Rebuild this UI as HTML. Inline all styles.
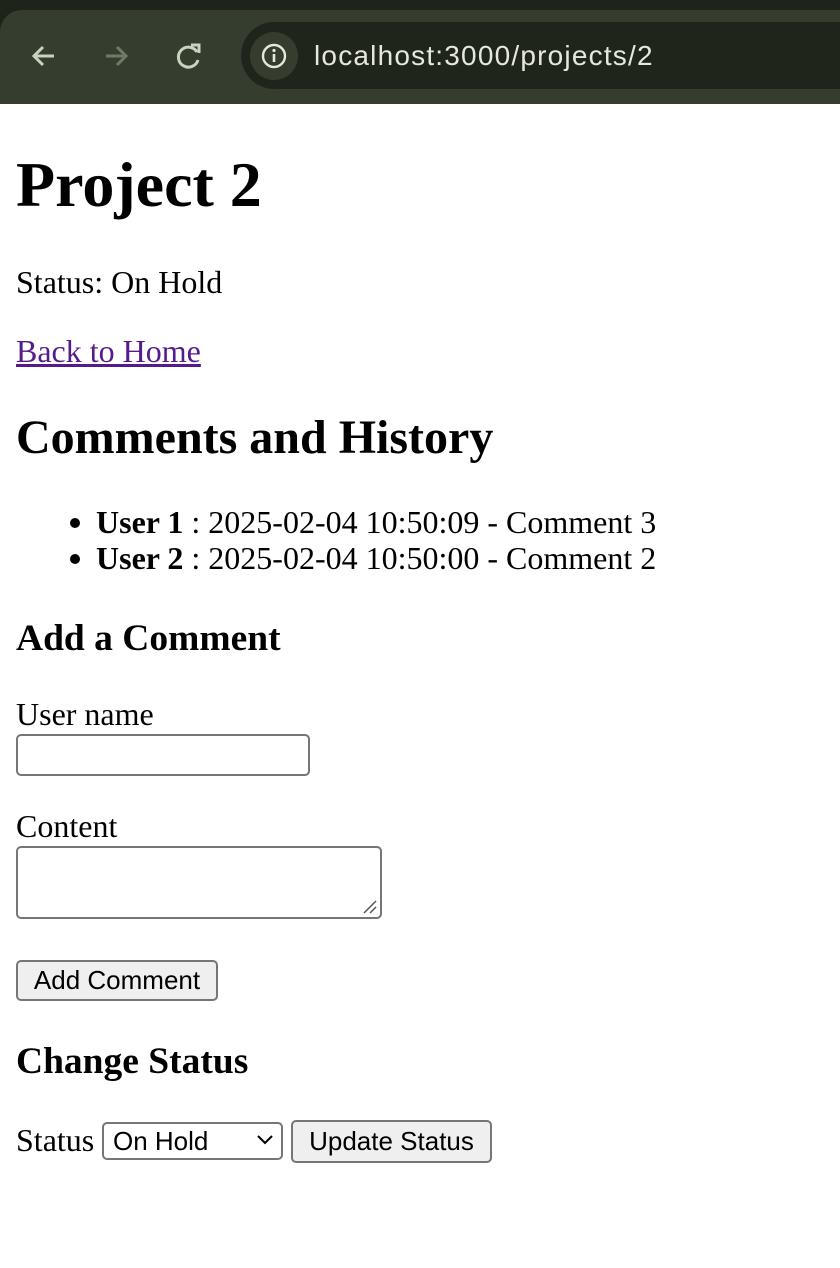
<!DOCTYPE html>
<html><head><meta charset="utf-8"><style>
*{margin:0;padding:0;box-sizing:border-box}
body{width:840px;height:1268px;background:#fff;position:relative;overflow:hidden;font-family:"Liberation Serif",serif;color:#000}
.a{position:absolute;white-space:nowrap;line-height:1}
.top{position:absolute;left:0;top:0;width:840px;height:104px;background:#1f241b}
.bar{position:absolute;left:0;top:10px;width:840px;height:94px;background:#343d2e;border-top-left-radius:22px}
.pill{position:absolute;left:241px;top:22px;width:640px;height:67px;background:#20251c;border-radius:34px}
.info{position:absolute;left:250px;top:32px;width:48px;height:48px;border-radius:50%;background:#343d2e}
.url{position:absolute;left:314px;top:42px;font-family:"Liberation Sans",sans-serif;font-size:28px;letter-spacing:1.2px;color:#e4e8de;line-height:1}
.b{font-weight:bold}
.box{position:absolute;border:2px solid #767676;border-radius:5px;background:#fff}
.btn{position:absolute;border:2px solid #767676;border-radius:5px;background:#efefef;font-family:"Liberation Sans",sans-serif;font-size:26px;text-align:center;line-height:36px}
</style></head><body>
<div class="top"></div><div class="bar"></div>
<svg style="position:absolute;left:28px;top:40px" width="32" height="32" viewBox="0 0 32 32"><path d="M26 16H6M15 7l-9 9 9 9" stroke="#c9d1c1" stroke-width="3" fill="none"/></svg>
<svg style="position:absolute;left:100px;top:40px" width="32" height="32" viewBox="0 0 32 32"><path d="M6 16h20M17 7l9 9-9 9" stroke="#6f7a66" stroke-width="3" fill="none"/></svg>
<svg style="position:absolute;left:173px;top:40px" width="32" height="32" viewBox="0 0 32 32"><path d="M24 12A10 10 0 1 0 25 20" stroke="#c9d1c1" stroke-width="3" fill="none"/><path d="M18 5h8v8" stroke="#c9d1c1" stroke-width="3" fill="none"/></svg>
<div class="pill"></div><div class="info"></div>
<svg style="position:absolute;left:261px;top:43px" width="26" height="26" viewBox="0 0 26 26"><circle cx="13" cy="13" r="11" stroke="#e4e8de" stroke-width="2.4" fill="none"/><path d="M13 11v8" stroke="#e4e8de" stroke-width="2.6"/><circle cx="13" cy="7.5" r="1.6" fill="#e4e8de"/></svg>
<div class="url">localhost:3000/projects/2</div>

<div class="a b" style="left:16px;top:153px;font-size:64px">Project 2</div>
<div class="a" style="left:16px;top:266px;font-size:32px">Status: On Hold</div>
<div class="a" style="left:16px;top:335px;font-size:32px;color:#551a8b;text-decoration:underline">Back to Home</div>
<div class="a b" style="left:16px;top:414px;font-size:48px">Comments and History</div>
<div class="a" style="left:96px;top:506px;font-size:32px"><span class="b">User 1</span> : 2025-02-04 10:50:09 - Comment 3</div>
<div class="a" style="left:96px;top:542px;font-size:32px"><span class="b">User 2</span> : 2025-02-04 10:50:00 - Comment 2</div>
<div style="position:absolute;left:70px;top:518px;width:10px;height:10px;border-radius:50%;background:#000"></div>
<div style="position:absolute;left:70px;top:554px;width:10px;height:10px;border-radius:50%;background:#000"></div>
<div class="a b" style="left:16px;top:620px;font-size:37.5px">Add a Comment</div>
<div class="a" style="left:16px;top:698px;font-size:32px">User name</div>
<div class="box" style="left:16px;top:734px;width:294px;height:42px"></div>
<div class="a" style="left:16px;top:810px;font-size:32px">Content</div>
<div class="box" style="left:16px;top:846px;width:366px;height:73px"></div>
<svg style="position:absolute;left:362px;top:899px" width="16" height="16"><path d="M2 14L14 2M8 14l6-6" stroke="#555" stroke-width="1.5"/></svg>
<div class="btn" style="left:16px;top:960px;width:202px;height:41px">Add Comment</div>
<div class="a b" style="left:16px;top:1043px;font-size:37.5px">Change Status</div>
<div class="a" style="left:16px;top:1124px;font-size:32px">Status</div>
<div class="box" style="left:102px;top:1122px;width:181px;height:38px;font-family:'Liberation Sans',sans-serif;font-size:26px;line-height:34px;padding-left:9px">On Hold</div>
<svg style="position:absolute;left:256px;top:1134px" width="18" height="12"><path d="M2 2l7 7 7-7" stroke="#000" stroke-width="2" fill="none"/></svg>
<div class="btn" style="left:291px;top:1120px;width:201px;height:43px;line-height:39px">Update Status</div>
</body></html>
